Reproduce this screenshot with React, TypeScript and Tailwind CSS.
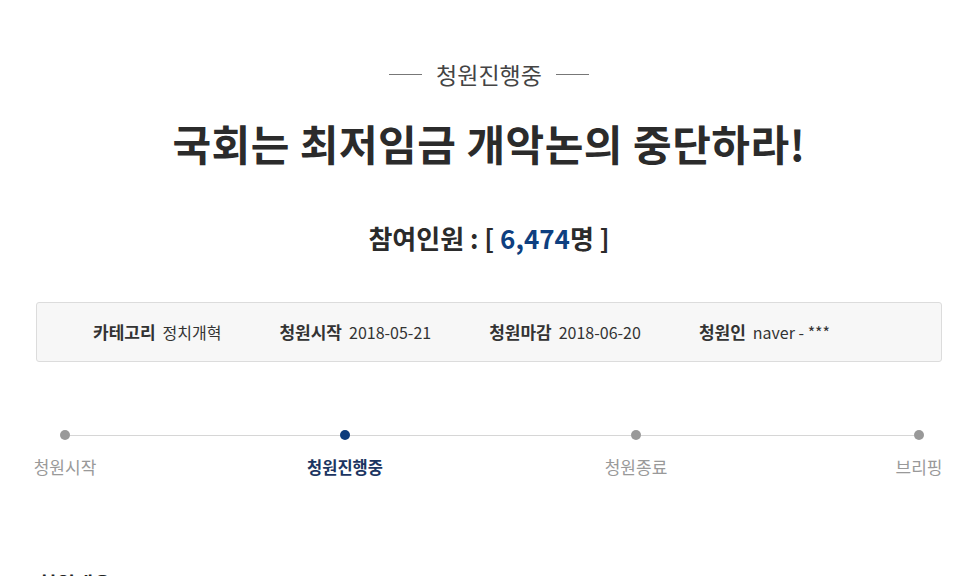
import type { ReactNode } from 'react'

const FONT = { fontFamily: '"Noto Sans CJK KR", "Noto Sans", sans-serif' }

type Info = { label: string; value: ReactNode }

const infos: Info[] = [
  { label: '카테고리', value: '정치개혁' },
  { label: '청원시작', value: '2018-05-21' },
  { label: '청원마감', value: '2018-06-20' },
  { label: '청원인', value: 'naver - ***' },
]

function Dot({ active }: { active?: boolean }) {
  return (
    <span
      className={
        'block w-[10px] h-[10px] rounded-full shrink-0 ' +
        (active ? 'bg-[#0c3b7c]' : 'bg-[#999999]')
      }
    />
  )
}

function Line({ w }: { w: string }) {
  return <span className={'block h-px bg-[#d6d6d6] ' + w} />
}

export default function App() {
  return (
    <div className="min-h-[576px] bg-white overflow-hidden" style={FONT}>
      <div className="ml-[36px] w-[906px] flex flex-col">
        {/* 상태 */}
        <div className="mt-[59px] h-[30px] flex items-center justify-center gap-[14px] text-[23px] text-[#444444]">
          <span className="block w-[33px] h-px bg-[#777777]" />
          <span className="leading-[30px]">청원진행중</span>
          <span className="block w-[33px] h-px bg-[#777777]" />
        </div>

        <h1 className="mt-[26px] h-[56px] leading-[56px] text-center text-[42px] font-bold tracking-[0.5px] text-[#2b2b2b]">
          국회는 최저임금 개악논의 중단하라!
        </h1>

        <h2 className="mt-[47px] h-[40px] leading-[40px] text-center text-[26px] font-bold text-[#2b2b2b]">
          참여인원 : [ <span className="text-[#0e3f80]">6,474</span>명 ]
        </h2>

        <ul className="mt-[44px] h-[60px] flex items-center pl-[56px] gap-[58px] bg-[#f7f7f7] border border-[#dcdcdc] rounded-[3px]">
          {infos.map((it) => (
            <li key={it.label} className="flex items-center gap-[7px] text-[#333333]">
              <span className="text-[17px] font-bold">{it.label}</span>
              <span className="text-[16px]">{it.value}</span>
            </li>
          ))}
        </ul>

        {/* 진행 단계 */}
        <div className="mt-[68px] h-[10px] flex items-center pl-[24px]">
          <Dot />
          <Line w="w-[270px]" />
          <Dot active />
          <Line w="w-[281px]" />
          <Dot />
          <Line w="w-[273px]" />
          <Dot />
        </div>
        <div className="mt-[15px] h-[24px] flex text-[17px] leading-[24px] -ml-[11px]">
          <span className="shrink-0 w-[80px] text-center text-[#999999] whitespace-nowrap">청원시작</span>
          <span className="shrink-0 ml-[200px] w-[80px] text-center text-[16.5px] font-bold text-[#1b3561] whitespace-nowrap">
            청원진행중
          </span>
          <span className="shrink-0 ml-[211px] w-[80px] text-center text-[#999999] whitespace-nowrap">청원종료</span>
          <span className="shrink-0 ml-[203px] w-[80px] text-center text-[#999999] whitespace-nowrap">브리핑</span>
        </div>

        <h3 className="mt-[91px] ml-[2px] text-[20px] font-bold leading-[28px] text-[#222222]">
          청원개요
        </h3>
      </div>
    </div>
  )
}
